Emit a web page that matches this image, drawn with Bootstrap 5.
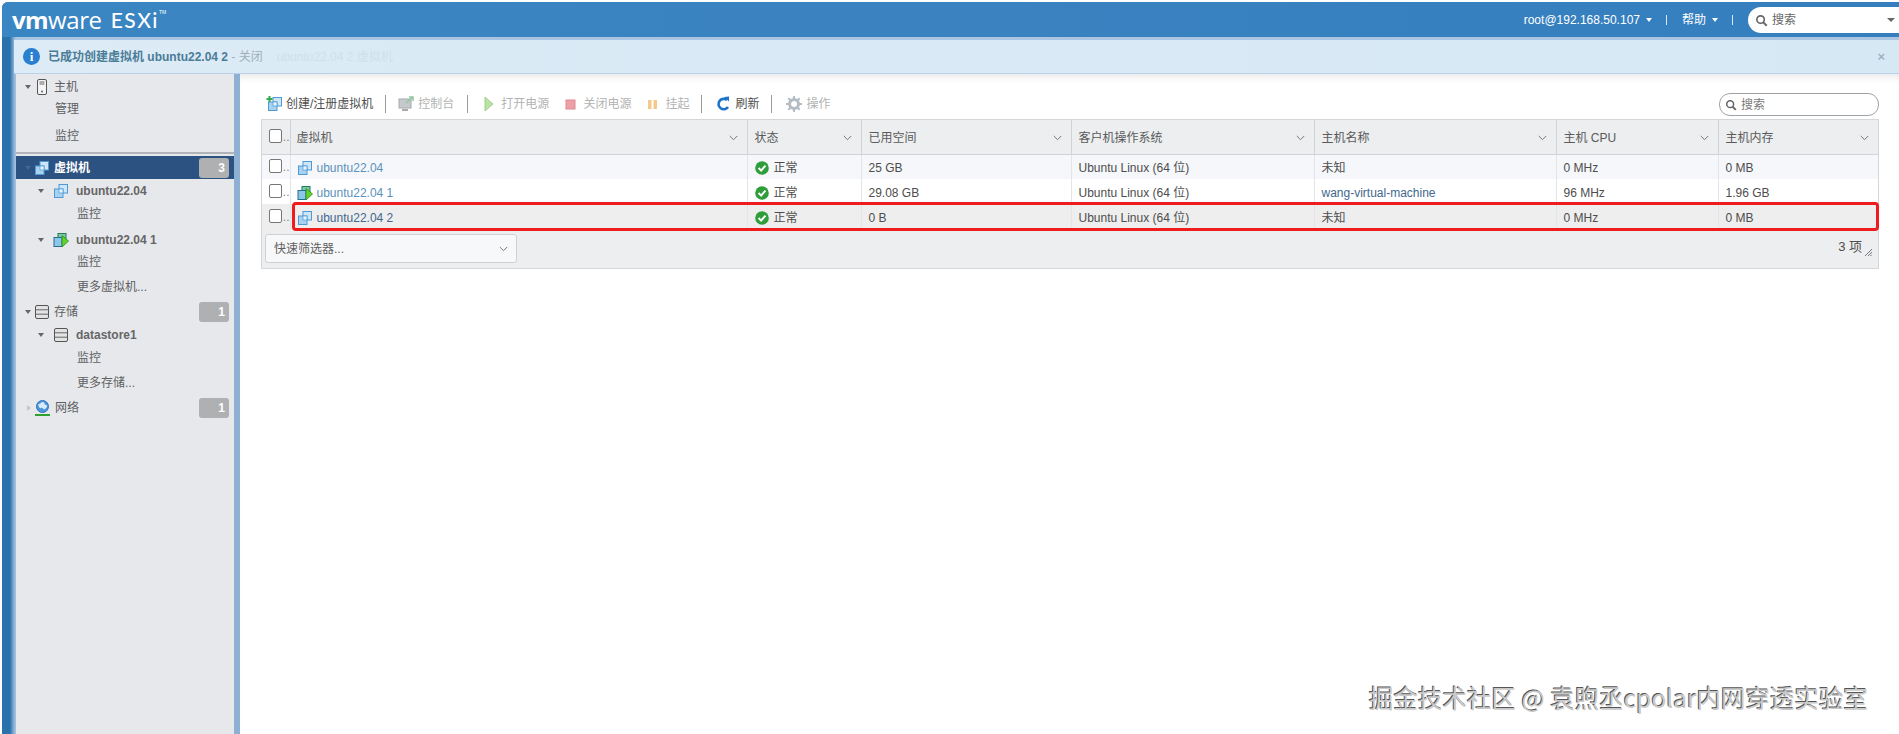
<!DOCTYPE html>
<html lang="zh-CN">
<head>
<meta charset="UTF-8">
<meta name="viewport" content="width=device-width, initial-scale=1.0">
<title>ESXi</title>
<link href="https://cdn.jsdelivr.net/npm/bootstrap@5.3.0/dist/css/bootstrap.min.css" rel="stylesheet">
<style>
  html, body { height: 100%; overflow: hidden; }
  body {
    background: #fff;
    font-family: "Liberation Sans", "Noto Sans CJK SC", sans-serif;
    font-size: 12px;
    color: #565656;
  }
  .esx-frame {
    height: 732px;
    margin: 2px 0 0 2px;
    border-radius: 6px 0 0 0;
    background: linear-gradient(90deg, #2b72ad 0, #2b72ad 8px, #8fb3d6 12px, #a9c4de 14px);
    overflow: hidden;
  }
  .esx-top {
    flex: 0 0 35px;
    background: linear-gradient(90deg, #3a86c2 0, #3a82c0 50%, #357fbf 100%);
    color: #fff;
    padding-left: 10px;
  }
  .logo-vm { font: 700 24px/1 "Open Sans", sans-serif; letter-spacing: -.6px; }
  .logo-ware { font: 400 24px/1 "Open Sans", sans-serif; letter-spacing: -.4px; margin-right: 9px; }
  .logo-esxi { font: 500 21px/1 "Lato", sans-serif; letter-spacing: 1.5px; }
  .logo-tm { font-size: 5px; align-self: flex-start; margin-top: 7px; }
  .top-sep { width: 1px; height: 10px; background: #dce9f5; margin: 0 15px 0 14px; }
  .caret-w { width: 0; height: 0; border: 3.5px solid transparent; border-top: 4px solid #fff; border-bottom: 0; margin-left: 6px; }
  .top-search {
    width: 151px; height: 26px;
    background: #fff;
    color: #666;
    border-radius: 13px 0 0 13px;
    padding-left: 7px;
    margin-top: 1px;
  }
  .caret-d { width: 0; height: 0; border: 4px solid transparent; border-top: 4px solid #666; border-bottom: 0; }
  .esx-notice {
    flex: 0 0 37px;
    margin-left: 12px;
    padding-top: 3px;
    background: #a9c5e2;
    border-radius: 5px 0 0 0;
  }
  .notice-in {
    height: 34px;
    background: linear-gradient(90deg, #dcebf6, #d6e8f4);
    border-bottom: 1px solid #b9d2ea;
    padding: 0 14px 0 9px;
    color: #4a7c97;
    font-weight: 700;
  }
  .notice-close { color: #9fb0b8; font-weight: 400; }
  .notice-ghost { color: #cfe0ea; font-weight: 400; margin-left: 14px; }
  .notice-x { color: #9db4c2; font-size: 13px; font-weight: 700; }
  .info-dot {
    width: 17px; height: 17px; border-radius: 50%;
    background: #2a7fd0; color: #fff;
    font: 700 13px/17px "Liberation Serif", serif;
    text-align: center;
    margin-right: 8px;
  }
  .esx-body { min-height: 0; }
  .esx-nav { flex: 0 0 218px; margin-left: 14px; background: #e6e8ec; padding-top: 2px; }
  .esx-split { flex: 0 0 6px; background: #8eb0d2; }
  .esx-main { min-width: 0; background: #fff; padding: 0 20px 0 21px; box-shadow: inset 0 8px 8px -6px #e4e4e4; }
  .nav-row { height: 22px; color: #5f6062; white-space: nowrap; }
  .nav-row.n-top { padding-left: 9px; }
  .nav-row.n-sub { padding-left: 22px; font-weight: 700; color: #666; }
  .nav-row.n-leaf { padding-left: 39px; }
  .nav-row.n-leaf2 { padding-left: 61px; }
  .nav-row.n-sel { background: #2c5282; color: #fff; font-weight: 700; height: 23px; }
  .nav-g1 { margin-top: 1px; }
  .nav-g3 { margin-top: 3px; }
  .nav-g4 { margin-top: 4px; }
  .nav-g5 { margin-top: 5px; }
  .nav-rule { border-top: 2px solid #b0b4b9; margin-top: 5px; margin-bottom: 2px; }
  .nav-tri { width: 0; height: 0; border: 3.5px solid transparent; border-top: 4px solid #666; border-bottom: 0; margin-right: 3px; }
  .n-sub .nav-tri { margin-right: 9px; }
  .nav-tri.tri-sel { border-top-color: #466890; }
  .nav-tri.tri-side { border: 3.5px solid transparent; border-left: 4px solid #c4c6c9; border-right: 0; margin: 0 4px 0 2px; }
  .nav-ico { width: 16px; height: 16px; margin-right: 4px; flex: none; }
  .n-sub .nav-ico { margin-right: 7px; }
  .nav-count {
    margin-left: auto; margin-right: 5px;
    width: 30px; height: 20px;
    background: #afb0b2; color: #fff;
    border-radius: 3px;
    font-weight: 700; font-size: 12px;
    text-align: right; padding: 0 4px;
    line-height: 20px;
  }
  .tool-bar { height: 45px; padding-top: 19px; color: #4d4d4d; white-space: nowrap; }
  .tool-items { margin: 2px 0 0 5px; }
  .tool-item { color: #4d4d4d; }
  .tool-item.off { color: #b3b3b3; }
  .tool-item svg { margin-right: 3px; flex: none; }
  .tool-sep { width: 1px; height: 18px; background: #9a9a9a; margin: 0 12px; }
  .tool-sep.sep-wide { margin-right: 14px; }
  .tool-sep.sep-nudge { margin-left: 13px; }
  .tool-item svg.gap-icon { margin-right: 4px; }
  .grid-search {
    margin-left: auto; width: 160px; height: 23px;
    border: 1px solid #9fa3a6; border-radius: 11px;
    padding-left: 5px; color: #7a7a7a;
  }
  .grid-wrap { border: 1px solid #d4d7da; }
  .vm-grid { table-layout: fixed; margin: 0; width: 100%; color: #4d4d4d; font-size: 12px; }
  .vm-grid > :not(caption) > * > * { padding: 2px 7px 0; border-bottom: 0; vertical-align: middle; box-shadow: none; }
  .vm-grid th { height: 34px; background: #eceef0; font-weight: 400; border-bottom: 1px solid #d0d3d6; border-left: 1px solid #d0d3d6; color: #5a5a5a; }
  .vm-grid td { height: 25px; border-left: 1px solid #e3e5e7; white-space: nowrap; overflow: hidden; }
  .vm-grid th:first-child, .vm-grid td:first-child { border-left: 0; padding: 0 0 0 7px; }
  .vm-grid > :not(caption) > * > :nth-child(2) { padding-left: 6px; }
  .vm-grid tr.r-a td { background: #f5f7fa; }
  .vm-grid tr.r-c td { background: #eeeeee; }
  .vm-link { color: #5b91bb; }
  .vm-link-dk { color: #41688e; }
  .chk-cell { color: #888; line-height: 1; align-items: flex-end; }
  .box-chk { display: block; width: 14px; height: 14px; border: 1px solid #777; border-radius: 2px; background: #fff; margin-top: -2px; margin-right: 1px; }
  .chev { flex: none; margin-right: 2px; }
  .ok-ico { margin-right: 5px; flex: none; margin-top: 1px; }
  .grid-foot { height: 39px; background: #eceef0; padding: 5px 6px 0 3px; color: #4d4d4d; }
  .quick-pick {
    width: 252px; height: 29px;
    background: #f7f8f9;
    border: 1px solid #cfd2d5; border-radius: 3px;
    padding: 0 8px 0 8px; color: #5f5f5f;
  }
  .foot-count { margin-left: auto; margin-top: 3px; margin-right: 2px; font-size: 13px; }
  .grip { margin-top: 14px; }
  .mark-box {
    position: absolute;
    left: 31px; top: 83px;
    width: 1587px; height: 29px;
    border: 3px solid #ee1c1c;
    border-radius: 4px;
    pointer-events: none;
  }
  .wm-text {
    position: absolute;
    right: 31px; bottom: 22px;
    font: 400 24.5px/28px "Noto Sans CJK SC", sans-serif;
    color: #c9c9c9;
    text-shadow: -1px -1px 0 #555, 1px 1px 0 #fff;
    white-space: nowrap;
  }
</style>
</head>
<body>
<svg width="0" height="0" class="position-absolute">
  <defs>
    <symbol id="i-vm" viewBox="0 0 16 16">
      <rect x="6" y="1.5" width="8.5" height="8.5" fill="#cfe6f8" stroke="#4d9ad6"/>
      <rect x="1.5" y="6" width="8.5" height="8.5" fill="#a9d2f1" stroke="#4d9ad6"/>
      <rect x="6" y="6" width="4" height="4" fill="#e9f4fc" stroke="#4d9ad6" stroke-width=".7"/>
    </symbol>
    <symbol id="i-vmon" viewBox="0 0 16 16">
      <rect x="5" y="1.5" width="8" height="8" fill="#7fc8a8" stroke="#1f7a5a"/>
      <rect x="1" y="5.5" width="8" height="9" fill="#8dc6ea" stroke="#226f8e"/>
      <path d="M9 3.5l6.5 5.5-6.5 6z" fill="#5fd52c" stroke="#2c8a14" stroke-width=".8"/>
    </symbol>
    <symbol id="i-store" viewBox="0 0 16 16">
      <rect x="1.5" y="1.5" width="13" height="13" rx="1.5" fill="#e3e3e3" stroke="#555"/>
      <path d="M2 5.800h12M2 10.200h12" stroke="#666"/>
    </symbol>
    <symbol id="i-host" viewBox="0 0 16 16">
      <rect x="3.500" y=".5" width="9" height="15" rx="1.5" fill="#f4f4f4" stroke="#555"/>
      <path d="M5.500 3h5M5.500 5h5" stroke="#666"/><circle cx="8" cy="12.500" r="1" fill="#666"/>
    </symbol>
    <symbol id="i-net" viewBox="0 0 16 16">
      <circle cx="7.500" cy="6.500" r="6" fill="#4b95dc" stroke="#2f72b8"/>
      <path d="M3 4c2 1 3-2 5-2s1 3 3 3 1 3-1 4-2-2-4-1-2-2-3-4z" fill="#d6ebfa"/>
      <path d="M0 15h15" stroke="#2ea12e" stroke-width="2"/>
    </symbol>
    <symbol id="i-chev" viewBox="0 0 9 6">
      <path d="M.8 1l3.700 3.700L8.200 1" fill="none" stroke="#777"/>
    </symbol>
    <symbol id="i-ok" viewBox="0 0 14 14">
      <circle cx="7" cy="7" r="6.800" fill="#2f9e3a"/>
      <path d="M3.600 7l2.500 2.600 4.400-5" fill="none" stroke="#fff" stroke-width="2"/>
    </symbol>
    <symbol id="i-glass" viewBox="0 0 14 14">
      <circle cx="6" cy="6" r="4" fill="none" stroke="#666" stroke-width="1.800"/>
      <path d="M9 9l3.600 3.600" stroke="#666" stroke-width="2.200"/>
    </symbol>
  </defs>
</svg>

<div class="esx-frame d-flex flex-column">
  <div class="esx-top d-flex align-items-center">
    <span class="logo-vm">vm</span><span class="logo-ware">ware</span><span class="logo-esxi">ESXi</span><span class="logo-tm">TM</span>
    <div class="ms-auto d-flex align-items-center">
      <span>root@192.168.50.107</span><span class="caret-w"></span>
      <span class="top-sep"></span>
      <span>帮助</span><span class="caret-w"></span>
      <span class="top-sep"></span>
      <div class="top-search d-flex align-items-center">
        <svg width="13" height="13" class="me-1"><use href="#i-glass"/></svg>
        <span>搜索</span>
        <span class="caret-d ms-auto me-1"></span>
      </div>
    </div>
  </div>

  <div class="esx-notice">
    <div class="notice-in d-flex align-items-center">
      <span class="info-dot">i</span>
      <span>已成功创建虚拟机 ubuntu22.04 2</span>
      <span class="notice-close">&nbsp;- 关闭</span>
      <span class="notice-ghost">ubuntu22.04 2 虚拟机</span>
      <span class="notice-x ms-auto">×</span>
    </div>
  </div>

  <div class="esx-body d-flex flex-grow-1">
    <div class="esx-nav">
      <div class="nav-row n-top d-flex align-items-center"><span class="nav-tri"></span><svg class="nav-ico"><use href="#i-host"/></svg><span>主机</span></div>
      <div class="nav-row n-leaf d-flex align-items-center">管理</div>
      <div class="nav-row n-leaf nav-g5 d-flex align-items-center">监控</div>
      <div class="nav-rule"></div>
      <div class="nav-row n-top n-sel d-flex align-items-center"><span class="nav-tri tri-sel"></span><svg class="nav-ico"><use href="#i-vm"/></svg><span>虚拟机</span><span class="nav-count">3</span></div>
      <div class="nav-row n-sub nav-g1 d-flex align-items-center"><span class="nav-tri"></span><svg class="nav-ico"><use href="#i-vm"/></svg><span>ubuntu22.04</span></div>
      <div class="nav-row n-leaf2 nav-g1 d-flex align-items-center">监控</div>
      <div class="nav-row n-sub nav-g4 d-flex align-items-center"><span class="nav-tri"></span><svg class="nav-ico"><use href="#i-vmon"/></svg><span>ubuntu22.04 1</span></div>
      <div class="nav-row n-leaf2 d-flex align-items-center">监控</div>
      <div class="nav-row n-leaf2 nav-g3 d-flex align-items-center">更多虚拟机...</div>
      <div class="nav-row n-top nav-g3 d-flex align-items-center"><span class="nav-tri"></span><svg class="nav-ico"><use href="#i-store"/></svg><span>存储</span><span class="nav-count">1</span></div>
      <div class="nav-row n-sub nav-g1 d-flex align-items-center"><span class="nav-tri"></span><svg class="nav-ico"><use href="#i-store"/></svg><span>datastore1</span></div>
      <div class="nav-row n-leaf2 nav-g1 d-flex align-items-center">监控</div>
      <div class="nav-row n-leaf2 nav-g3 d-flex align-items-center">更多存储...</div>
      <div class="nav-row n-top nav-g3 d-flex align-items-center"><span class="nav-tri tri-side"></span><svg class="nav-ico"><use href="#i-net"/></svg><span>网络</span><span class="nav-count">1</span></div>
    </div>
    <div class="esx-split"></div>

    <div class="esx-main flex-grow-1">
      <div class="tool-bar d-flex align-items-start">
        <div class="tool-items d-flex align-items-center">
          <span class="tool-item d-flex align-items-center">
            <svg width="17" height="16" viewBox="0 0 17 16"><use href="#i-vm" x="1" y="0" width="16" height="16"/><path d="M3.500 0v6M.5 3h6" stroke="#35a84a" stroke-width="2"/></svg>创建/注册虚拟机</span>
          <span class="tool-sep"></span>
          <span class="tool-item off d-flex align-items-center">
            <svg width="17" height="16" viewBox="0 0 17 16"><rect x="1" y="3" width="12" height="9" fill="#c6c9cc" stroke="#a5a8ab"/><path d="M4 14h6" stroke="#aaa" stroke-width="2"/><path d="M8 7l7-6M11 1h4v4" fill="none" stroke="#8fc7a0" stroke-width="1.500"/></svg>控制台</span>
          <span class="tool-sep sep-nudge"></span>
          <span class="tool-item off d-flex align-items-center ms-1">
            <svg width="10" height="16" viewBox="0 0 10 16"><path d="M1 1l8 7-8 7z" fill="#b9e3a4" stroke="#a0cf8c"/></svg><span class="ms-1">打开电源</span></span>
          <span class="tool-item off d-flex align-items-center ms-3">
            <svg width="11" height="11" viewBox="0 0 11 11"><rect x="1" y="1" width="9" height="9" fill="#eea0a8" stroke="#dd8a92"/></svg><span class="ms-1">关闭电源</span></span>
          <span class="tool-item off d-flex align-items-center ms-3">
            <svg width="11" height="11" viewBox="0 0 11 11"><path d="M1 1h3.500v9H1zM6.500 1H10v9H6.500z" fill="#f5c88c"/></svg><span class="ms-1">挂起</span></span>
          <span class="tool-sep sep-wide"></span>
          <span class="tool-item d-flex align-items-center">
            <svg class="gap-icon" width="15" height="16" viewBox="0 0 15 16"><path d="M12 11a5.200 5.200 0 1 1-1-7" fill="none" stroke="#1d74c9" stroke-width="2.600"/><path d="M8 1l5-.5v5z" fill="#1d74c9"/></svg>刷新</span>
          <span class="tool-sep sep-wide"></span>
          <span class="tool-item off d-flex align-items-center">
            <svg class="gap-icon" width="16" height="16" viewBox="0 0 16 16"><circle cx="8" cy="8" r="4.500" fill="none" stroke="#b4bcc4" stroke-width="3"/><path d="M8 0v3M8 13v3M0 8h3M13 8h3M2.300 2.300l2.200 2.200M11.500 11.500l2.200 2.200M2.300 13.700l2.200-2.200M11.500 4.500l2.200-2.200" stroke="#b4bcc4" stroke-width="2"/></svg>操作</span>
        </div>
        <div class="grid-search d-flex align-items-center">
          <svg width="12" height="12" class="me-1"><use href="#i-glass"/></svg><span>搜索</span>
        </div>
      </div>

      <div class="position-relative">
        <div class="grid-wrap">
          <table class="table vm-grid">
            <colgroup><col style="width:28px"><col style="width:457px"><col style="width:114px"><col style="width:210px"><col style="width:243px"><col style="width:242px"><col style="width:162px"><col></colgroup>
            <thead>
              <tr>
                <th><div class="chk-cell d-flex"><span class="box-chk"></span>..</div></th>
                <th><div class="d-flex justify-content-between align-items-center">虚拟机<svg class="chev" width="9" height="6"><use href="#i-chev"/></svg></div></th>
                <th><div class="d-flex justify-content-between align-items-center">状态<svg class="chev" width="9" height="6"><use href="#i-chev"/></svg></div></th>
                <th><div class="d-flex justify-content-between align-items-center">已用空间<svg class="chev" width="9" height="6"><use href="#i-chev"/></svg></div></th>
                <th><div class="d-flex justify-content-between align-items-center">客户机操作系统<svg class="chev" width="9" height="6"><use href="#i-chev"/></svg></div></th>
                <th><div class="d-flex justify-content-between align-items-center">主机名称<svg class="chev" width="9" height="6"><use href="#i-chev"/></svg></div></th>
                <th><div class="d-flex justify-content-between align-items-center">主机 CPU<svg class="chev" width="9" height="6"><use href="#i-chev"/></svg></div></th>
                <th><div class="d-flex justify-content-between align-items-center">主机内存<svg class="chev" width="9" height="6"><use href="#i-chev"/></svg></div></th>
              </tr>
            </thead>
            <tbody>
              <tr class="r-a">
                <td><div class="chk-cell d-flex"><span class="box-chk"></span>..</div></td>
                <td><div class="d-flex align-items-center vm-link"><svg class="nav-ico"><use href="#i-vm"/></svg>ubuntu22.04</div></td>
                <td><div class="d-flex align-items-center"><svg class="ok-ico" width="14" height="14"><use href="#i-ok"/></svg>正常</div></td>
                <td>25 GB</td><td>Ubuntu Linux (64 位)</td><td>未知</td><td>0 MHz</td><td>0 MB</td>
              </tr>
              <tr class="r-b">
                <td><div class="chk-cell d-flex"><span class="box-chk"></span>..</div></td>
                <td><div class="d-flex align-items-center vm-link"><svg class="nav-ico"><use href="#i-vmon"/></svg>ubuntu22.04 1</div></td>
                <td><div class="d-flex align-items-center"><svg class="ok-ico" width="14" height="14"><use href="#i-ok"/></svg>正常</div></td>
                <td>29.08 GB</td><td>Ubuntu Linux (64 位)</td><td><span class="vm-link-dk">wang-virtual-machine</span></td><td>96 MHz</td><td>1.96 GB</td>
              </tr>
              <tr class="r-c">
                <td><div class="chk-cell d-flex"><span class="box-chk"></span>..</div></td>
                <td><div class="d-flex align-items-center vm-link-dk"><svg class="nav-ico"><use href="#i-vm"/></svg>ubuntu22.04 2</div></td>
                <td><div class="d-flex align-items-center"><svg class="ok-ico" width="14" height="14"><use href="#i-ok"/></svg>正常</div></td>
                <td>0 B</td><td>Ubuntu Linux (64 位)</td><td>未知</td><td>0 MHz</td><td>0 MB</td>
              </tr>
            </tbody>
          </table>
          <div class="grid-foot d-flex align-items-start">
            <div class="quick-pick d-flex align-items-center justify-content-between">
              <span>快速筛选器...</span><svg width="9" height="6"><use href="#i-chev"/></svg>
            </div>
            <span class="foot-count">3 项</span>
            <svg class="grip" width="8" height="8" viewBox="0 0 8 8"><path d="M1 8l7-7M4 8l4-4M6.500 8L8 6.500" stroke="#777"/></svg>
          </div>
        </div>
        <div class="mark-box"></div>
      </div>
    </div>
  </div>
</div>
<div class="wm-text">掘金技术社区 @ 袁煦丞cpolar内网穿透实验室</div>
<script src="https://cdn.jsdelivr.net/npm/bootstrap@5.3.0/dist/js/bootstrap.bundle.min.js"></script>
</body>
</html>
